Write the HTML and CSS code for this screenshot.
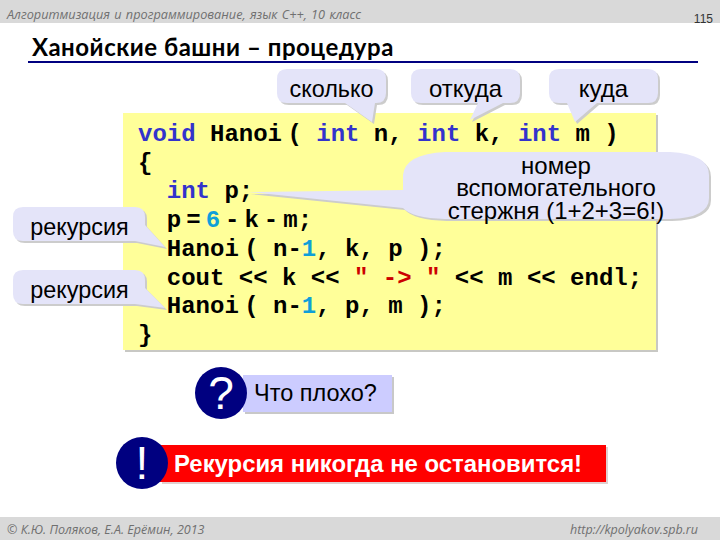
FILE: index.html
```html
<!DOCTYPE html>
<html lang="ru">
<head>
<meta charset="utf-8">
<title>Ханойские башни – процедура</title>
<link rel="stylesheet" href="styles.css">
</head>
<body>
<div class="slide">
  <header class="topbar">
    <span class="course">Алгоритмизация и программирование, язык C++, 10 класс</span>
    <span class="pageno">115</span>
  </header>
  <h1 class="title">Ханойские башни – процедура</h1>
  <pre class="code"><code><b class="kw">void</b> Hanoi<span class="ns"> </span>( <b class="kw">int</b> n, <b class="kw">int</b> k, <b class="kw">int</b> m )
{
  <b class="kw">int</b> p;
  <span class="tight">p = <b class="num">6</b> - k - m;</span>
  Hanoi<span class="ns"> </span>( n-<b class="num">1</b>, k, p );
  cout &lt;&lt; k &lt;&lt; <b class="str">" -&gt; "</b> &lt;&lt; m &lt;&lt; endl;
  Hanoi<span class="ns"> </span>( n-<b class="num">1</b>, p, m );
}</code></pre>
  <div class="question">
    <span class="badge">?</span>
    <span class="qtext">Что плохо?</span>
  </div>
  <div class="answer">
    <span class="badge">!</span>
    <span class="atext">Рекурсия никогда не остановится!</span>
  </div>
  <footer class="bottombar">
    <span>© К.Ю. Поляков, Е.А. Ерёмин, 2013</span>
    <span>http://kpolyakov.spb.ru</span>
  </footer>

  <div class="callouts">
    <svg class="bubbles" width="720" height="540" viewBox="0 0 720 540" aria-hidden="true">
      <defs>
        <path id="b1" d="M287 69H376Q386 69 386 79V93Q386 103 376 103H375L372 122L345 103H287Q277 103 277 93V79Q277 69 287 69Z"/>
        <path id="b2" d="M421 69H510Q520 69 520 79V93Q520 103 510 103H503L470 120L478 103H421Q411 103 411 93V79Q411 69 421 69Z"/>
        <path id="b3" d="M559 69H648Q658 69 658 79V93Q658 103 648 103H597L575 122L567 103H559Q549 103 549 93V79Q549 69 559 69Z"/>
        <path id="b4" d="M445 152H670Q709 154 709 175V198Q709 218 670 219H445Q412 218 403 208L248 192L403 190V175Q405 154 445 152Z"/>
        <path id="b5" d="M23 207H135Q145 207 145 217V225L165 247L135 241H23Q13 241 13 231V217Q13 207 23 207Z"/>
        <path id="b6" d="M23 270H135Q145 270 145 280V288L165 308L135 304H23Q13 304 13 294V280Q13 270 23 270Z"/>
      </defs>
      <g class="bubble-shadow">
        <use href="#b1"/><use href="#b2"/><use href="#b3"/><use href="#b4"/><use href="#b5"/><use href="#b6"/>
      </g>
      <g class="bubble-fill">
        <use href="#b1"/><use href="#b2"/><use href="#b3"/><use href="#b4"/><use href="#b5"/><use href="#b6"/>
      </g>
    </svg>
    <div class="label l-count">сколько</div>
    <div class="label l-from">откуда</div>
    <div class="label l-to">куда</div>
    <div class="label l-aux">номер<br>вспомогательного<br>стержня (1+2+3=6!)</div>
    <div class="label l-rec1">рекурсия</div>
    <div class="label l-rec2">рекурсия</div>
  </div>
</div>
</body>
</html>
```
FILE: styles.css
```css
* { box-sizing: border-box; }
html, body { margin: 0; padding: 0; }
body { width: 720px; height: 540px; background: #fff; overflow: hidden; }

.slide {
  position: relative;
  width: 720px;
  height: 540px;
  display: flex;
  flex-direction: column;
  font-family: "Liberation Sans", Arial, sans-serif;
  color: #000;
}

.topbar {
  height: 23px;
  background: #d9d9d9;
  display: flex;
  justify-content: space-between;
  padding: 6px 7px 0 7px;
  font-family: "Open Sans", sans-serif;
  font-size: 12.7px;
  line-height: 16px;
  color: #707070;
}
.course { font-style: italic; word-spacing: 1px; }
.pageno {
  color: #333;
  font-family: "Liberation Sans", sans-serif;
  font-size: 12px;
  line-height: 26px;
  height: 26px;
}

.title {
  margin: 10px 22px 0 28px;
  height: 30px;
  padding: 0 0 0 4px;
  border-bottom: 2.5px solid #000080;
  font-family: "Lato", sans-serif;
  font-weight: 700;
  font-size: 24px;
  line-height: 27px;
  letter-spacing: 0.52px;
  color: #000;
}

.code {
  margin: 50px 0 0 123px;
  width: 533px;
  height: 237px;
  padding: 8px 0 0 15px;
  background: #ffff99;
  box-shadow: 2px 2px 0 #c8c8c4;
  font-family: "Liberation Mono", monospace;
  font-weight: 700;
  font-size: 24px;
  line-height: 28.7px;
  color: #000;
  overflow: hidden;
}
.code code { font: inherit; }
.kw { color: #3333cc; }
.num { color: #0f9fd8; }
.str { color: #cc0000; }
.ns { word-spacing: -9px; }
.tight { word-spacing: -9.4px; }

.badge {
  flex: none;
  width: 52px;
  height: 52px;
  border-radius: 50%;
  background: #000080;
  color: #fff;
  display: flex;
  align-items: center;
  justify-content: center;
  font-size: 46px;
  line-height: 1;
  position: relative;
  z-index: 1;
}

.question {
  display: flex;
  align-items: center;
  margin: 17px 0 0 195px;
  height: 52px;
}
.qtext {
  margin-left: -4px;
  width: 149px;
  height: 37px;
  padding-left: 11px;
  background: #ccccff;
  box-shadow: 2px 2px 0 #c8c8c8;
  font-size: 23.5px;
  line-height: 37px;
}

.answer {
  display: flex;
  align-items: center;
  margin: 18px 0 0 116px;
  height: 52px;
}
.atext {
  margin-left: -8px;
  width: 446px;
  height: 37px;
  padding-left: 14px;
  background: #ff0000;
  box-shadow: 2px 2px 0 #e0d0d0;
  color: #fff;
  font-weight: 700;
  font-size: 23.9px;
  line-height: 37px;
  white-space: nowrap;
}

.bottombar {
  margin-top: auto;
  height: 23px;
  background: #d9d9d9;
  display: flex;
  justify-content: space-between;
  padding: 4px 22px 0 7px;
  font-family: "Open Sans", sans-serif;
  font-style: italic;
  font-size: 12.5px;
  line-height: 17px;
  color: #707070;
}

.callouts {
  position: absolute;
  inset: 0;
  pointer-events: none;
}
.bubbles { position: absolute; left: 0; top: 0; }
.bubble-shadow { fill: #cccccc; transform: translate(2px, 2px); }
.bubble-fill { fill: #e4e4f9; }

.label {
  position: absolute;
  display: flex;
  align-items: center;
  justify-content: center;
  text-align: center;
  font-size: 24px;
  line-height: 22.5px;
  white-space: nowrap;
}
.l-count { left: 277px; top: 72px; width: 109px; height: 34px; font-size: 23.4px; }
.l-from { left: 411px; top: 72px; width: 109px; height: 34px; }
.l-to { left: 549px; top: 72px; width: 109px; height: 34px; }
.l-aux { left: 403px; top: 155px; width: 306px; height: 67px; }
.l-rec1 { left: 13px; top: 209px; width: 133px; height: 36px; font-size: 23.4px; }
.l-rec2 { left: 13px; top: 272px; width: 133px; height: 36px; font-size: 23.4px; }
```
